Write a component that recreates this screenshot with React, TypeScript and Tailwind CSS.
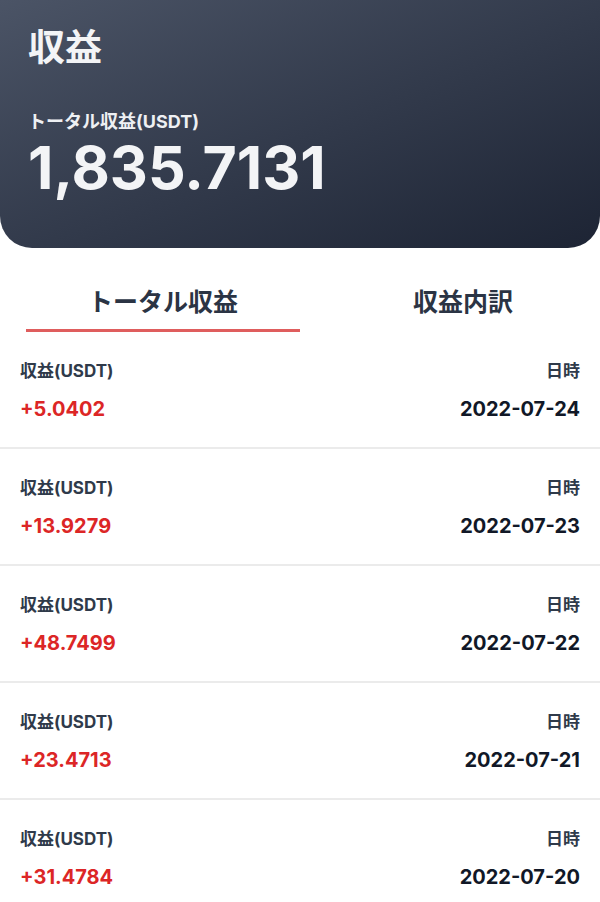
import React from 'react';

const rows = [
  { amount: '+5.0402', date: '2022-07-24' },
  { amount: '+13.9279', date: '2022-07-23' },
  { amount: '+48.7499', date: '2022-07-22' },
  { amount: '+23.4713', date: '2022-07-21' },
  { amount: '+31.4784', date: '2022-07-20' },
];

const font = { fontFamily: 'Inter, "Noto Sans CJK JP", sans-serif' };

const App: React.FC = () => {
  return (
    <div className="w-[600px] min-h-[902px] bg-white" style={font}>
      <div className="h-[248px] rounded-b-[32px] bg-gradient-to-br from-[#4b5466] to-[#1d2434] px-[28px] pt-[24px] text-white">
        <h1 className="text-[37px] font-bold leading-[48px] text-[#f3f4f6]">収益</h1>
        <p className="mt-[38px] text-[18px] font-bold leading-[24px] text-[#eef0f3]">トータル収益(USDT)</p>
        <p className="mt-[0px] text-[59px] font-bold leading-[68px] text-[#f3f4f6]">1,835.7131</p>
      </div>

      <div className="flex h-[84px] items-stretch">
        <div className="ml-[26px] flex w-[274px] flex-col items-center justify-end">
          <span className="text-[25px] font-bold leading-[32px] text-[#2b3444]">トータル収益</span>
          <div className="mt-[11px] h-[3px] w-full bg-[#df5d5d]" />
        </div>
        <div className="ml-[26px] flex flex-1 flex-col items-center justify-end">
          <span className="text-[25px] font-bold leading-[32px] text-[#2b3444]">収益内訳</span>
          <div className="mt-[11px] h-[3px] w-full" />
        </div>
      </div>

      <div>
        {rows.map((r) => (
          <div
            key={r.date}
            className="flex items-start justify-between border-b-2 border-[#ebebeb] px-[20px] pt-[28px] pb-[25px]"
          >
            <div>
              <p className="text-[17px] font-bold leading-[22px] text-[#2f3a4a]">収益(USDT)</p>
              <p className="mt-[14px] text-[20px] font-bold leading-[26px] text-[#dc2626]">{r.amount}</p>
            </div>
            <div className="text-right">
              <p className="text-[17px] font-bold leading-[22px] text-[#2f3a4a]">日時</p>
              <p className="mt-[14px] text-[20px] font-bold leading-[26px] text-[#111827]">{r.date}</p>
            </div>
          </div>
        ))}
      </div>
    </div>
  );
};

export default App;
